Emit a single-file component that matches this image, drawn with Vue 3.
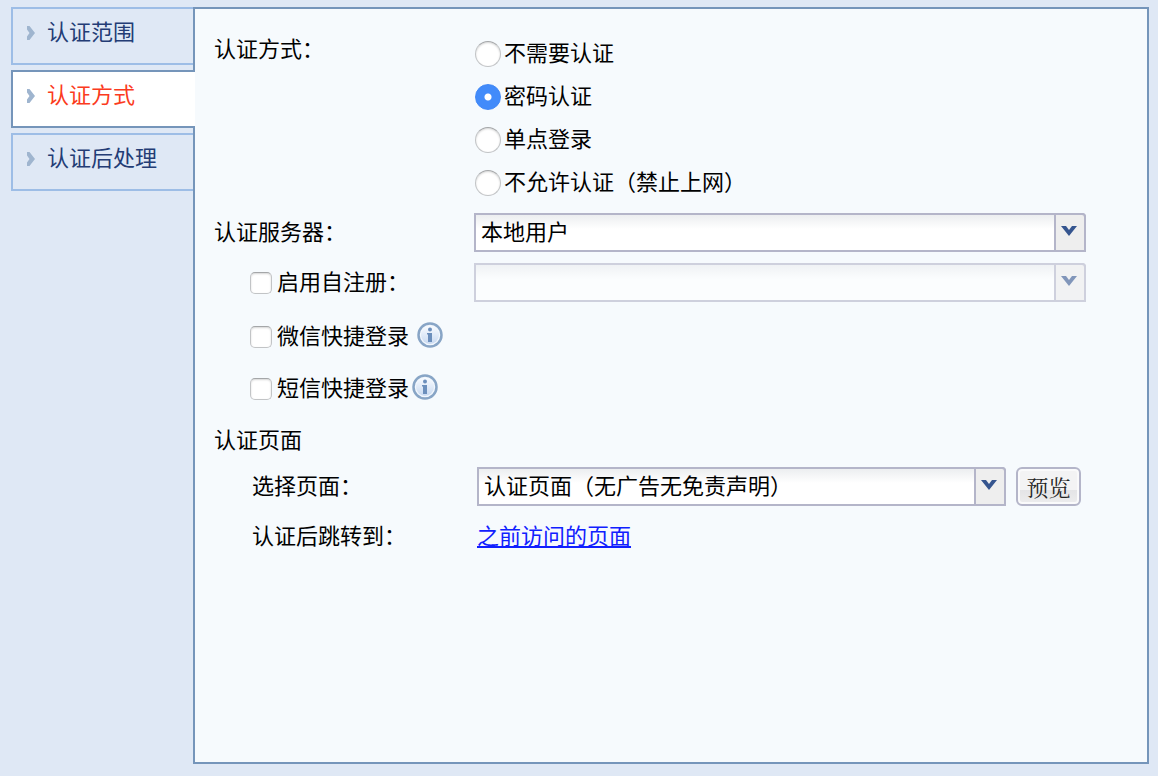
<script setup>
import { ref } from 'vue'

const tabs = ['认证范围', '认证方式', '认证后处理']
const activeTab = ref('认证方式')

const methods = ['不需要认证', '密码认证', '单点登录', '不允许认证（禁止上网）']
const method = ref('密码认证')

const selfRegister = ref(false)
const wechat = ref(false)
const sms = ref(false)
</script>

<template>
  <div class="page">
    <nav class="tabs" aria-label="认证设置">
      <button
        v-for="tab in tabs"
        :key="tab"
        type="button"
        class="tab"
        :class="{ active: tab === activeTab }"
        @click="activeTab = tab"
      >
        <svg class="tab-arrow" viewBox="0 0 8 14" aria-hidden="true">
          <path d="M0 0h2.500L8 7l-5.500 7H0v-3.500L2.500 7 0 3.500z" fill="#9fb5cf" />
        </svg>
        <span>{{ tab }}</span>
      </button>
    </nav>

    <form class="panel" @submit.prevent>
      <div class="row methods-row">
        <span id="method-label" class="method-label">认证方式：</span>
        <div class="methods" role="radiogroup" aria-labelledby="method-label">
          <label v-for="item in methods" :key="item" class="radio-line">
            <input v-model="method" type="radio" name="method" :value="item" />
            <span>{{ item }}</span>
          </label>
        </div>
      </div>

      <div class="row server-row">
        <label for="server">认证服务器：</label>
        <div class="combo">
          <select id="server">
            <option>本地用户</option>
          </select>
          <span class="trigger" aria-hidden="true">
            <svg viewBox="0 0 16 10"><path d="M0 0h5l3 4 3-4h5L8 10z" fill="#35558f" /></svg>
          </span>
        </div>
      </div>

      <div class="row register-row">
        <label class="check-line">
          <input v-model="selfRegister" type="checkbox" />
          <span>启用自注册：</span>
        </label>
        <div class="combo" :class="{ disabled: !selfRegister }">
          <select aria-label="自注册" :disabled="!selfRegister"></select>
          <span class="trigger" aria-hidden="true">
            <svg viewBox="0 0 16 10"><path d="M0 0h5l3 4 3-4h5L8 10z" fill="#35558f" /></svg>
          </span>
        </div>
      </div>

      <div class="line">
        <label class="check-line">
          <input v-model="wechat" type="checkbox" />
          <span>微信快捷登录</span>
        </label>
        <svg class="info spaced" viewBox="0 0 26 26" aria-hidden="true">
          <defs>
            <linearGradient id="disc" x1="0" y1="0" x2="0" y2="1">
              <stop offset="0" stop-color="#f8fbff" />
              <stop offset="1" stop-color="#c9daf1" />
            </linearGradient>
          </defs>
          <circle cx="13" cy="13" r="11.500" fill="#f2f7fd" stroke="#88a5c6" stroke-width="2.500" />
          <circle cx="13" cy="13" r="9" fill="url(#disc)" />
          <circle cx="13" cy="7.500" r="2" fill="#6c8fbc" />
          <path d="M11 11h4v9h-4v-7.500h-1V11z" fill="#6c8fbc" />
        </svg>
      </div>

      <div class="line">
        <label class="check-line">
          <input v-model="sms" type="checkbox" />
          <span>短信快捷登录</span>
        </label>
        <svg class="info" viewBox="0 0 26 26" aria-hidden="true">
          <circle cx="13" cy="13" r="11.500" fill="#f2f7fd" stroke="#88a5c6" stroke-width="2.500" />
          <circle cx="13" cy="13" r="9" fill="url(#disc)" />
          <circle cx="13" cy="7.500" r="2" fill="#6c8fbc" />
          <path d="M11 11h4v9h-4v-7.500h-1V11z" fill="#6c8fbc" />
        </svg>
      </div>

      <div class="line">认证页面</div>

      <div class="row page-row">
        <label for="auth-page" class="indent">选择页面：</label>
        <div class="page-field">
          <div class="combo">
            <select id="auth-page">
              <option>认证页面（无广告无免责声明）</option>
            </select>
            <span class="trigger" aria-hidden="true">
              <svg viewBox="0 0 16 10"><path d="M0 0h5l3 4 3-4h5L8 10z" fill="#35558f" /></svg>
            </span>
          </div>
          <button type="button" class="preview">预览</button>
        </div>
      </div>

      <div class="row redirect-row">
        <span class="indent">认证后跳转到：</span>
        <div><a href="#">之前访问的页面</a></div>
      </div>
    </form>
  </div>
</template>

<style>
body {
  margin: 0;
  background: #dfe8f5;
}
</style>

<style scoped>
.page {
  box-sizing: border-box;
  display: flex;
  align-items: stretch;
  min-height: 100vh;
  padding: 7px 9px 12px 11px;
  font-family: "Liberation Sans", "Noto Sans CJK SC", sans-serif;
  font-size: 22px;
  line-height: 32px;
  color: #000;
}

.tabs {
  display: flex;
  flex: 0 0 184px;
  flex-direction: column;
  gap: 5px;
  margin-right: -2px;
}

.tab {
  box-sizing: border-box;
  display: flex;
  align-items: center;
  gap: 12px;
  height: 58px;
  margin-right: 2px;
  padding: 0 0 7px 14px;
  border: 2px solid #9dbde6;
  border-right: 0;
  background: #dfe8f5;
  font: inherit;
  color: #233c75;
  cursor: pointer;
}

.tab.active {
  z-index: 1;
  margin-right: 0;
  border-color: #7595ba;
  background: #fff;
  color: #fb3a20;
}

.tab-arrow {
  width: 8px;
  height: 14px;
}

.panel {
  box-sizing: border-box;
  flex: 1;
  min-width: 0;
  padding: 23px 61px 24px 19px;
  border: 2px solid #7595ba;
  background: #f6fafd;
}

.row {
  display: grid;
  grid-template-columns: 260px 1fr;
  align-items: center;
}

.methods-row {
  align-items: start;
  margin-bottom: 9px;
}

.method-label {
  line-height: 36px;
}

.methods {
  display: flex;
  flex-direction: column;
  padding-left: 1px;
}

.radio-line {
  display: flex;
  align-items: center;
  gap: 3px;
  height: 43px;
}

.server-row {
  margin-bottom: 11px;
}

.register-row {
  margin-bottom: 9px;
}

.page-row,
.redirect-row {
  grid-template-columns: 263px 1fr;
}

.redirect-row {
  height: 52px;
  margin-top: 5px;
}

.line {
  display: flex;
  align-items: center;
  height: 52px;
}

.check-line {
  display: flex;
  align-items: center;
  gap: 5px;
  padding-left: 36px;
}

.indent {
  padding-left: 38px;
}

input {
  box-sizing: border-box;
  flex: none;
  margin: 0;
  appearance: none;
  border: 1px solid #c2c4c6;
  border-top-color: #a4a6a8;
  background: #fff;
  box-shadow: inset 0 1px 2px #d5d5d5;
}

input[type="checkbox"] {
  width: 22px;
  height: 22px;
  border-radius: 5px;
}

input[type="radio"] {
  width: 26px;
  height: 26px;
  border-radius: 50%;
}

input[type="radio"]:checked {
  border-color: #3f87f7;
  background: radial-gradient(circle, #fff 3px, #428bfa 4px);
  box-shadow: none;
}

input[type="checkbox"]:checked {
  border-color: #3f87f7;
  background: #428bfa;
}

.info {
  width: 26px;
  height: 26px;
  margin: 0 0 4px 3px;
}

.info.spaced {
  margin-left: 8px;
}

.combo {
  display: grid;
  grid-template-columns: 1fr 32px;
  min-width: 0;
  height: 39px;
}

.combo select {
  box-sizing: border-box;
  grid-area: 1 / 1 / 2 / 3;
  width: 100%;
  height: 39px;
  margin: 0;
  padding: 0 38px 0 5px;
  appearance: none;
  border: 2px solid #b4b5c9;
  border-radius: 0 4px 0 0;
  background: linear-gradient(#eceef0, #fff 14px);
  font: inherit;
  color: #000;
}

.combo .trigger {
  box-sizing: border-box;
  grid-area: 1 / 2;
  display: flex;
  align-items: center;
  justify-content: center;
  padding: 0 2px 3px 0;
  border: 2px solid #b4b5c9;
  border-radius: 0 4px 0 0;
  background: #eee;
  pointer-events: none;
}

.trigger svg {
  width: 16px;
  height: 10px;
}

.combo.disabled {
  opacity: 0.6;
}

.combo.disabled select {
  opacity: 1;
}

.page-field {
  display: flex;
  gap: 10px;
  padding-right: 5px;
}

.page-field .combo {
  flex: 1;
}

.preview {
  box-sizing: border-box;
  width: 65px;
  height: 39px;
  padding: 0;
  border: 2px solid #b4b5c9;
  border-radius: 6px;
  background: linear-gradient(#f3f3f4 60%, #e4e4e6 60%, #ededee);
  box-shadow: inset 0 0 0 2px #fafafb;
  font-family: "Noto Serif CJK SC", "Noto Sans CJK SC", serif;
  font-size: 22px;
  line-height: 32px;
  color: #222;
}

a {
  color: #1020ff;
}
</style>
